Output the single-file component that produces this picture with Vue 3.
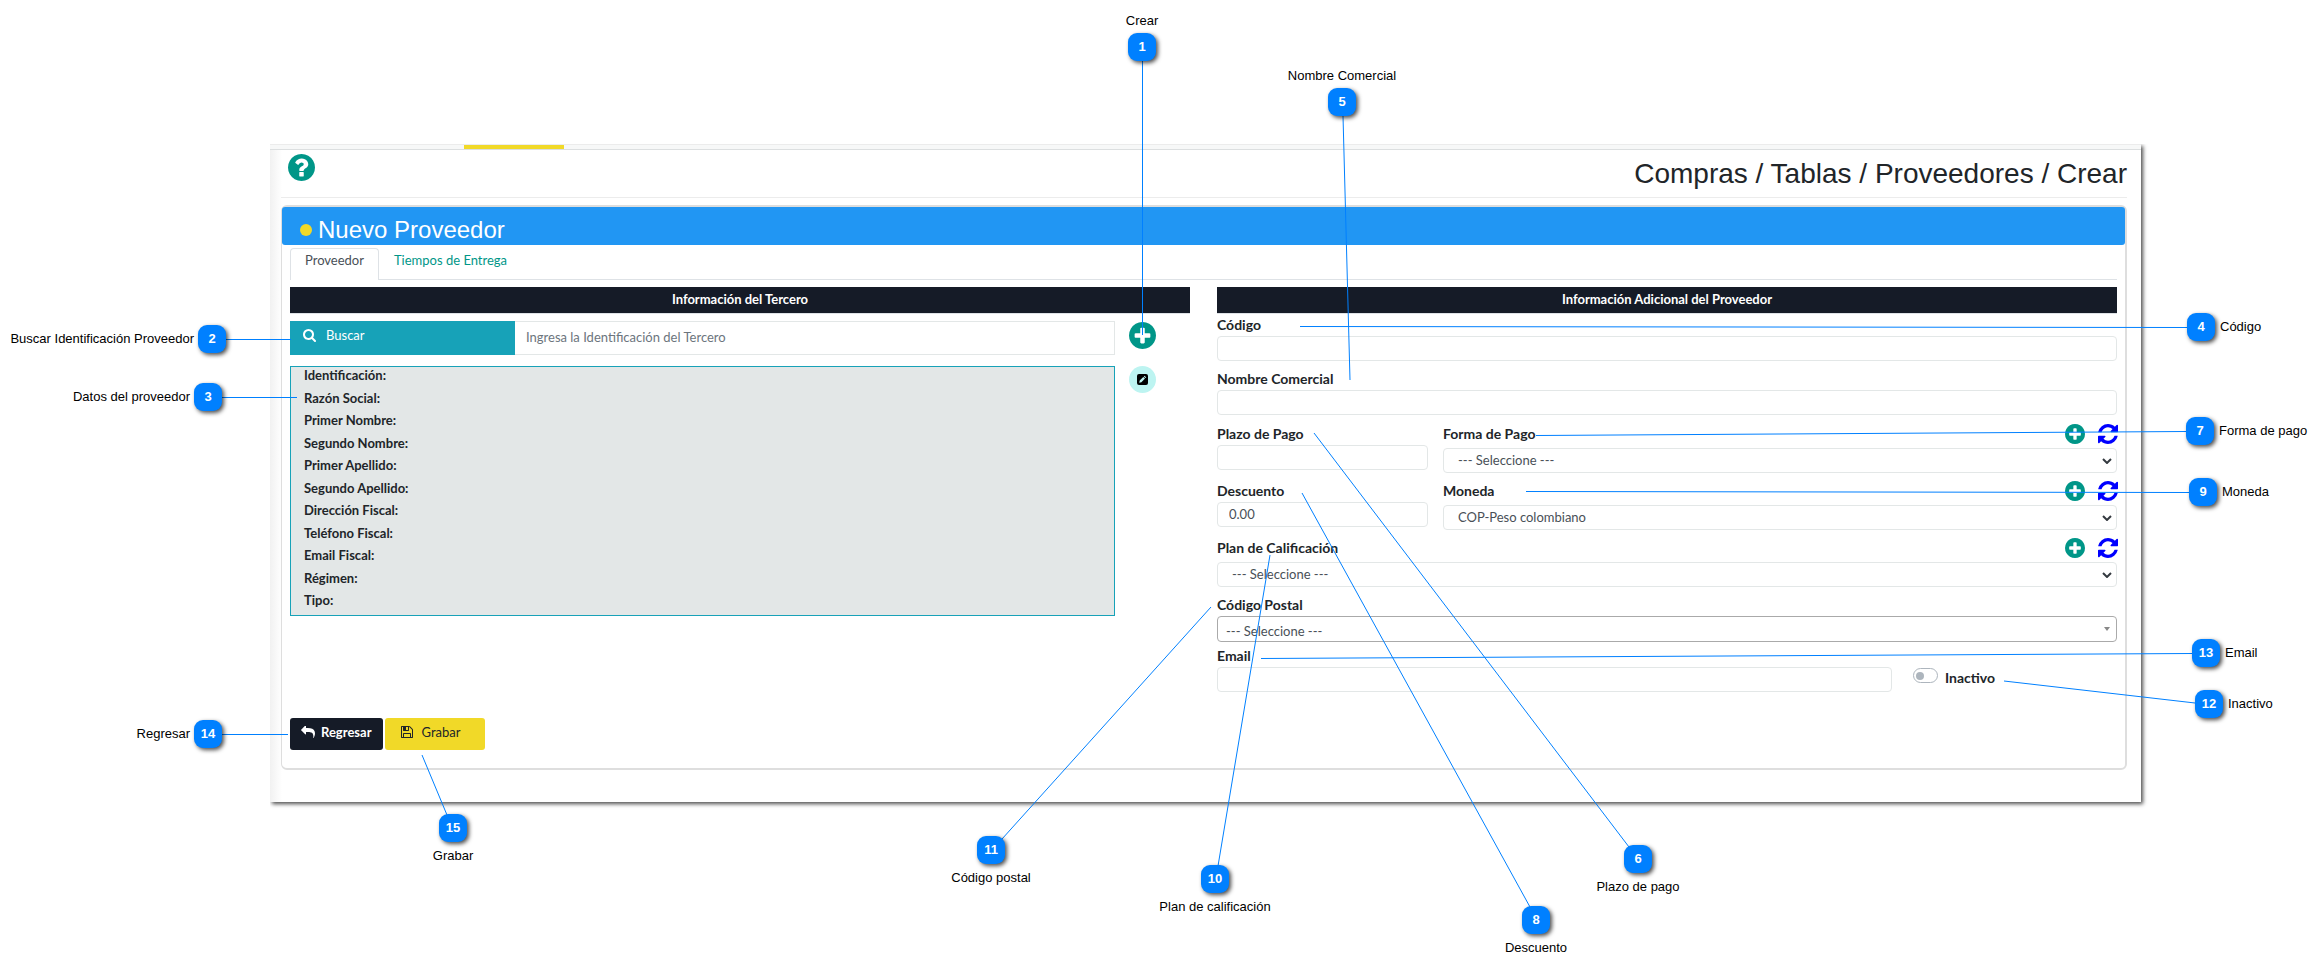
<script setup>
import { ref } from 'vue'

const CIRCLE =
  'M1664 896q0 209-103 385.5t-279.500 279.500-385.500 103-385.500-103-279.500-279.500-103-385.500 103-385.500 279.500-279.500 385.500-103 385.500 103 279.500 279.500 103 385.500z'
const helpPath =
  'M1024 1376v-192q0-14-9-23t-23-9h-192q-14 0-23 9t-9 23v192q0 14 9 23t23 9h192q14 0 23-9t9-23zM1280 704q0-88-55.500-163t-138.500-116-170-41q-243 0-371 213-15 24 8 42l132 100q7 6 19 6 16 0 25-12 53-68 86-92 34-24 86-24 48 0 85.500 26t37.500 59q0 38-20 61t-68 45q-63 28-115.500 86.500t-52.500 125.500v36q0 14 9 23t23 9h192q14 0 23-9t9-23q0-19 21.500-49.500t54.500-49.500q32-18 49-28.500t46-35 44.500-48 28-60.500 12.500-81z' +
  CIRCLE
const plusPath =
  'M1344 960v-128q0-26-19-45t-45-19h-256v-256q0-26-19-45t-45-19h-128q-26 0-45 19t-19 45v256h-256q-26 0-45 19t-19 45v128q0 26 19 45t45 19h256v256q0 26 19 45t45 19h128q26 0 45-19t19-45v-256h256q26 0 45-19t19-45z' +
  CIRCLE
const refreshPath =
  'M1639 1056q0 5-1 7-64 268-268 434.500t-478 166.500q-146 0-282.500-55t-243.500-157l-129 129q-19 19-45 19t-45-19-19-45v-448q0-26 19-45t45-19h448q26 0 45 19t19 45-19 45l-137 137q71 66 161 102t187 36q134 0 250-65t186-179q11-17 53-117 8-23 30-23h192q13 0 22.500 9.500t9.500 22.500zm25-800v448q0 26-19 45t-45 19h-448q-26 0-45-19t-19-45 19-45l138-138q-148-137-349-137-134 0-250 65t-186 179q-11 17-53 117-8 23-30 23h-199q-13 0-22.500-9.500t-9.500-22.500v-7q65-268 270-434.500t480-166.500q146 0 284 55.500t245 156.500l130-129q19-19 45-19t45 19 19 45z'
const searchPath =
  'M1216 832q0-185-131.500-316.500t-316.500-131.500-316.500 131.500-131.500 316.500 131.500 316.500 316.500 131.500 316.500-131.500 131.500-316.500zm512 832q0 52-38 90t-90 38q-54 0-90-38l-343-342q-179 124-399 124-143 0-273.500-55.500t-225-150-150-225-55.500-273.500 55.500-273.500 150-225 225-150 273.500-55.500 273.500 55.500 225 150 150 225 55.500 273.500q0 220-124 399l343 343q37 37 37 90z'
const replyPath =
  'M1792 1120q0 166-127 451-3 7-10.500 24t-13.500 30-13 22q-12 17-28 17-15 0-23.500-10t-8.500-25q0-9 2.500-26.500t2.500-23.500q5-68 5-123 0-101-17.500-181t-48.500-138.500-80-101-105.500-69.500-133-42.500-154-21.500-175.500-6h-224v256q0 26-19 45t-45 19-45-19l-512-512q-19-19-19-45t19-45l512-512q19-19 45-19t45 19 19 45v256h224q713 0 875 403 53 134 53 333z'
const savePath =
  'M512 1536h768v-384h-768v384zm896 0h128v-896q0-14-10-38.500t-20-34.500l-281-281q-10-10-34-20t-39-10v416q0 40-28 68t-68 28h-576q-40 0-68-28t-28-68v-416h-128v1280h128v-416q0-40 28-68t68-28h832q40 0 68 28t28 68v416zm-384-928v-320q0-13-9.500-22.500t-22.500-9.500h-192q-13 0-22.500 9.500t-9.500 22.500v320q0 13 9.500 22.500t22.500 9.500h192q13 0 22.500-9.500t9.500-22.500zm640 32v928q0 40-28 68t-68 28h-1344q-40 0-68-28t-28-68v-1344q0-40 28-68t68-28h928q40 0 88 20t76 48l280 280q28 28 48 76t20 88z'

const terceroFields = [
  'Identificación:', 'Razón Social:', 'Primer Nombre:', 'Segundo Nombre:',
  'Primer Apellido:', 'Segundo Apellido:', 'Dirección Fiscal:',
  'Teléfono Fiscal:', 'Email Fiscal:', 'Régimen:', 'Tipo:',
]

const busqueda = ref('')
const codigo = ref('')
const nombreComercial = ref('')
const plazo = ref('')
const descuento = ref('0.00')
const email = ref('')
const inactivo = ref(false)

// x, y: top left corner of the 28px badge; line: [x1, y1, x2, y2]
const callouts = [
  { n: 1, text: 'Crear', side: 'top', x: 1128, y: 33, line: [1142.5, 61, 1142.5, 335] },
  { n: 2, text: 'Buscar Identificación Proveedor', side: 'left', x: 198, y: 325, line: [226, 339.5, 291, 339.5] },
  { n: 3, text: 'Datos del proveedor', side: 'left', x: 194, y: 383, line: [222, 397.5, 297, 397.5] },
  { n: 4, text: 'Código', side: 'right', x: 2187, y: 313, line: [1300, 326.5, 2187, 327.5] },
  { n: 5, text: 'Nombre Comercial', side: 'top', x: 1328, y: 88, line: [1343, 116, 1350, 380] },
  { n: 6, text: 'Plazo de pago', side: 'bottom', x: 1624, y: 845, line: [1314, 433, 1629, 847] },
  { n: 7, text: 'Forma de pago', side: 'right', x: 2186, y: 417, line: [1536, 435.5, 2186, 431.5] },
  { n: 8, text: 'Descuento', side: 'bottom', x: 1522, y: 906, line: [1302, 493, 1530, 907] },
  { n: 9, text: 'Moneda', side: 'right', x: 2189, y: 478, line: [1526, 491.5, 2189, 492.5] },
  { n: 10, text: 'Plan de calificación', side: 'bottom', x: 1201, y: 865, line: [1270, 555, 1218, 866] },
  { n: 11, text: 'Código postal', side: 'bottom', x: 977, y: 836, line: [1211, 607, 1002, 839] },
  { n: 12, text: 'Inactivo', side: 'right', x: 2195, y: 690, line: [2004, 681, 2195, 703] },
  { n: 13, text: 'Email', side: 'right', x: 2192, y: 639, line: [1261, 658.5, 2192, 653.5] },
  { n: 14, text: 'Regresar', side: 'left', x: 194, y: 720, line: [222, 734.5, 288, 734.5] },
  { n: 15, text: 'Grabar', side: 'bottom', x: 439, y: 814, line: [422, 755, 447, 815] },
]
</script>

<template>
  <div class="stage">
    <main class="window">
      <div class="strip"><span class="strip-mark"></span></div>
      <div class="body">
        <header class="page-head">
          <button type="button" class="icon-btn help" aria-label="Ayuda">
            <svg viewBox="128 128 1536 1536"><path :d="helpPath" fill-rule="evenodd" /></svg>
          </button>
          <h1>Compras / Tablas / Proveedores / Crear</h1>
        </header>

        <section class="card">
          <h2 class="card-head"><span class="dot"></span>Nuevo Proveedor</h2>
          <nav class="tabs">
            <a href="#proveedor" class="tab active">Proveedor</a>
            <a href="#tiempos" class="tab">Tiempos de Entrega</a>
          </nav>

          <form class="columns" @submit.prevent>
            <div class="col">
              <h3>Información del Tercero</h3>
              <div class="lookup">
                <div class="search">
                  <button type="button" class="buscar">
                    <svg viewBox="64 128 1664 1664"><path :d="searchPath" fill-rule="evenodd" /></svg>
                    Buscar
                  </button>
                  <input v-model="busqueda" type="text" placeholder="Ingresa la Identificación del Tercero" aria-label="Identificación del Tercero" />
                </div>
                <button type="button" class="icon-btn add" aria-label="Crear">
                  <svg viewBox="128 128 1536 1536"><path :d="plusPath" fill-rule="evenodd" /></svg>
                </button>
                <ul class="tercero">
                  <li v-for="f in terceroFields" :key="f">{{ f }}</li>
                </ul>
                <button type="button" class="icon-btn edit" aria-label="Editar">
                  <svg viewBox="0 0 11 11">
                    <rect width="11" height="11" rx="2" fill="#000" />
                    <path d="M2.200 8.800l.5-2.200 3.600-3.700 1.700 1.700-3.600 3.700zM6.800 2.400l.8-.7 1.700 1.700-.8.7z" fill="#bdf4f1" />
                  </svg>
                </button>
              </div>
            </div>

            <div class="col">
              <h3>Información Adicional del Proveedor</h3>
              <div class="fields">
                <div class="field">
                  <label for="codigo">Código</label>
                  <input id="codigo" v-model="codigo" type="text" />
                </div>
                <div class="field">
                  <label for="nombre">Nombre Comercial</label>
                  <input id="nombre" v-model="nombreComercial" type="text" />
                </div>
                <div class="pair first">
                  <div class="field">
                    <label for="plazo">Plazo de Pago</label>
                    <input id="plazo" v-model="plazo" type="text" />
                  </div>
                  <div class="field tools">
                    <div class="label-row">
                      <label for="forma">Forma de Pago</label>
                      <button type="button" class="icon-btn small" aria-label="Agregar forma de pago">
                        <svg viewBox="128 128 1536 1536"><path :d="plusPath" fill-rule="evenodd" /></svg>
                      </button>
                      <button type="button" class="icon-btn small refresh" aria-label="Actualizar formas de pago">
                        <svg viewBox="128 128 1536 1536"><path :d="refreshPath" /></svg>
                      </button>
                    </div>
                    <div class="select">
                      <select id="forma"><option>--- Seleccione ---</option></select>
                      <svg class="chevron" viewBox="0 0 10 6"><path d="M1 1l4 4 4-4" /></svg>
                    </div>
                  </div>
                </div>
                <div class="pair">
                  <div class="field">
                    <label for="descuento">Descuento</label>
                    <input id="descuento" v-model="descuento" type="text" />
                  </div>
                  <div class="field tools">
                    <div class="label-row">
                      <label for="moneda">Moneda</label>
                      <button type="button" class="icon-btn small" aria-label="Agregar moneda">
                        <svg viewBox="128 128 1536 1536"><path :d="plusPath" fill-rule="evenodd" /></svg>
                      </button>
                      <button type="button" class="icon-btn small refresh" aria-label="Actualizar monedas">
                        <svg viewBox="128 128 1536 1536"><path :d="refreshPath" /></svg>
                      </button>
                    </div>
                    <div class="select">
                      <select id="moneda"><option>COP-Peso colombiano</option></select>
                      <svg class="chevron" viewBox="0 0 10 6"><path d="M1 1l4 4 4-4" /></svg>
                    </div>
                  </div>
                </div>
                <div class="field tools">
                  <div class="label-row">
                    <label for="plan">Plan de Calificación</label>
                    <button type="button" class="icon-btn small" aria-label="Agregar plan">
                      <svg viewBox="128 128 1536 1536"><path :d="plusPath" fill-rule="evenodd" /></svg>
                    </button>
                    <button type="button" class="icon-btn small refresh" aria-label="Actualizar planes">
                      <svg viewBox="128 128 1536 1536"><path :d="refreshPath" /></svg>
                    </button>
                  </div>
                  <div class="select">
                    <select id="plan"><option>--- Seleccione ---</option></select>
                    <svg class="chevron" viewBox="0 0 10 6"><path d="M1 1l4 4 4-4" /></svg>
                  </div>
                </div>
                <div class="field">
                  <label for="postal">Código Postal</label>
                  <div class="select postal">
                    <select id="postal"><option>--- Seleccione ---</option></select>
                    <svg class="caret" viewBox="0 0 6 4"><path d="M0 0h6l-3 4z" /></svg>
                  </div>
                </div>
                <div class="last">
                  <div class="field">
                    <label for="email">Email</label>
                    <input id="email" v-model="email" type="text" />
                  </div>
                  <div class="switch">
                    <input id="inactivo" v-model="inactivo" type="checkbox" />
                    <label for="inactivo">Inactivo</label>
                  </div>
                </div>
              </div>
            </div>
          </form>

          <footer class="actions">
            <button type="button" class="btn back">
              <svg viewBox="0 128 1792 1536"><path :d="replyPath" /></svg>
              Regresar
            </button>
            <button type="submit" class="btn save">
              <svg viewBox="128 128 1536 1536"><path :d="savePath" fill-rule="evenodd" /></svg>
              Grabar
            </button>
          </footer>
        </section>
      </div>
    </main>

    <svg class="lines">
      <line v-for="c in callouts" :key="c.n" :x1="c.line[0]" :y1="c.line[1]" :x2="c.line[2]" :y2="c.line[3]" />
    </svg>
    <div v-for="c in callouts" :key="c.n" class="callout" :class="c.side" :style="{ left: c.x + 'px', top: c.y + 'px' }">
      <span class="badge">{{ c.n }}</span>
      <span class="caption">{{ c.text }}</span>
    </div>
  </div>
</template>

<style>
body {
  margin: 0;
  background: #fff;
}
</style>

<style scoped>
.stage {
  position: relative;
  box-sizing: border-box;
  padding: 144px 181px 168px 270px;
  overflow: hidden;
  font-family: Lato, "Liberation Sans", sans-serif;
  font-size: 13px;
  color: #212529;
}
.stage *,
.stage *::before {
  box-sizing: border-box;
}
button,
input,
select {
  margin: 0;
  font: inherit;
  color: inherit;
}
button {
  padding: 0;
  border: 0;
  background: none;
  cursor: pointer;
}
svg {
  display: block;
  fill: currentColor;
}
h1,
h2,
h3 {
  margin: 0;
}

.window {
  background: linear-gradient(to right, #f1f1f1, #fff 12px);
  box-shadow: 2px 2px 4px rgba(0, 0, 0, 0.7);
  clip-path: inset(0 -12px -12px 0);
}
.strip {
  height: 6px;
  padding-left: 194px;
  background: #f7f8f8;
  border-top: 1px solid #ececec;
  border-bottom: 1px solid #dcdfe0;
}
.strip-mark {
  display: block;
  width: 100px;
  height: 4px;
  background: #f1d928;
}
.body {
  padding: 0 14px 32px 11px;
}
.page-head {
  display: flex;
  align-items: flex-start;
  justify-content: space-between;
  height: 48px;
  padding: 4px 0 0 7px;
  border-bottom: 1px solid #ececec;
}
.page-head h1 {
  font: 400 28px/40px "Liberation Sans", Arial, sans-serif;
}
.icon-btn {
  width: 27px;
  height: 27px;
  color: #009688;
}
.icon-btn svg {
  width: 100%;
  height: 100%;
}

.card {
  margin-top: 7px;
  border: 2px solid #dedede;
  border-left-width: 1px;
  border-radius: 6px;
  background: #fff;
}
.card-head {
  display: flex;
  align-items: center;
  gap: 6px;
  height: 38px;
  padding: 8px 18px 0;
  border-radius: 3px;
  background: #2196f3;
  color: #fff;
  font: 400 24px/30px "Liberation Sans", Arial, sans-serif;
}
.dot {
  width: 12px;
  height: 12px;
  border-radius: 50%;
  background: #f1d928;
}
.tabs {
  display: flex;
  margin: 3px 8px 0;
  border-bottom: 1px solid #dee2e6;
}
.tab {
  height: 32px;
  padding: 0 14px;
  margin-bottom: -1px;
  border: 1px solid transparent;
  border-bottom: 0;
  border-radius: 4px 4px 0 0;
  color: #009688;
  line-height: 22px;
  text-decoration: none;
}
.tab.active {
  border-color: #dee2e6;
  background: #fff;
  color: #495057;
}

.columns {
  display: grid;
  grid-template-columns: 1fr 1fr;
  gap: 27px;
  padding: 7px 8px 0;
}
.col h3 {
  height: 27px;
  border-bottom: 1px solid #dee2e6;
  background: #151b27;
  color: #fff;
  font-size: 13px;
  font-weight: 700;
  line-height: 25px;
  text-align: center;
}
.lookup {
  display: grid;
  grid-template-columns: 1fr 61px;
  gap: 11px 14px;
  padding-top: 7px;
}
.search {
  display: flex;
}
.buscar {
  display: flex;
  align-items: center;
  gap: 10px;
  flex: 0 0 225px;
  height: 34px;
  padding: 0 0 6px 13px;
  background: #17a2b8;
  color: #fff;
}
.buscar svg {
  width: 13px;
  height: 13px;
}
.search input {
  flex: 1;
  min-width: 0;
  height: 34px;
  padding: 0 11px 2px;
  border: 1px solid #e3e7e7;
  border-left: 0;
}
.search input::placeholder {
  color: #6c757d;
}
.add {
  margin-top: 1px;
}
.edit {
  display: grid;
  place-items: center;
  border-radius: 50%;
  background: #bdf4f1;
}
.edit svg {
  width: 11px;
  height: 11px;
}
.tercero {
  display: flex;
  flex-direction: column;
  justify-content: space-between;
  min-height: 250px;
  margin: 0;
  padding: 0 13px 7px;
  border: 1px solid #17a2b8;
  background: #e3e7e7;
  list-style: none;
  font-weight: 700;
  line-height: 16px;
}

.fields {
  display: flex;
  flex-direction: column;
  gap: 8px;
  padding-top: 1px;
}
.field {
  display: flex;
  flex-direction: column;
  gap: 1px;
}
.field.tools {
  gap: 0;
}
.field label,
.switch label {
  font-size: 14px;
  font-weight: 700;
  line-height: 20px;
}
.label-row {
  display: flex;
  height: 24px;
}
.label-row label {
  flex: 1;
}
.small {
  width: 20px;
  height: 20px;
}
.refresh {
  margin: 0 -1px 0 13px;
  color: #00f;
}
.field input,
.select select {
  width: 100%;
  height: 25px;
  padding: 0 11px 2px;
  border: 1px solid #e3e7e7;
  border-radius: 4px;
  background: #fff;
  color: #495057;
}
.pair {
  display: grid;
  grid-template-columns: 211fr 674fr;
  align-items: start;
  gap: 15px;
}
.pair.first {
  padding-top: 1px;
}
.select {
  display: grid;
  align-items: center;
}
.select > * {
  grid-area: 1 / 1;
}
.select select {
  padding-left: 14px;
  appearance: none;
}
.select svg {
  justify-self: end;
  pointer-events: none;
}
.chevron {
  width: 10px;
  height: 6px;
  margin-right: 5px;
  fill: none;
  stroke: #343a40;
  stroke-width: 2;
}
.select.postal select {
  height: 26px;
  padding: 4px 8px 0;
  border-color: #aaa;
}
.caret {
  width: 6px;
  height: 4px;
  margin-right: 7px;
  fill: #888;
}
.last {
  display: grid;
  grid-template-columns: 675fr 204fr;
  gap: 21px;
  margin-top: -4px;
}
.switch {
  display: flex;
  align-items: flex-start;
  gap: 7px;
  padding-top: 22px;
}
.switch input {
  display: flex;
  align-items: center;
  width: 25px;
  height: 15px;
  padding-left: 2px;
  border: 1px solid #adb5bd;
  border-radius: 8px;
  background: #fff;
  appearance: none;
}
.switch input::before {
  content: "";
  width: 8px;
  height: 8px;
  border-radius: 50%;
  background: #adb5bd;
}
.switch input:checked {
  justify-content: flex-end;
  padding: 0 2px;
}

.actions {
  display: flex;
  gap: 2px;
  padding: 26px 8px 18px;
}
.btn {
  display: flex;
  align-items: center;
  height: 32px;
  padding-bottom: 5px;
  border-radius: 3px;
}
.back {
  gap: 6px;
  padding-left: 11px;
  padding-right: 11px;
  background: #151b27;
  color: #fff;
  font-weight: 700;
}
.back svg {
  width: 14px;
  height: 12px;
}
.save {
  gap: 9px;
  padding-left: 16px;
  padding-right: 25px;
  background: #f1d928;
}
.save svg {
  width: 12px;
  height: 12px;
}

.lines {
  position: absolute;
  inset: 0;
  width: 100%;
  height: 100%;
  stroke: #0080ff;
  stroke-width: 1;
  pointer-events: none;
}
.callout {
  position: absolute;
  display: flex;
  align-items: center;
  justify-content: center;
  width: 28px;
  height: 28px;
  color: #000;
  font-family: "Liberation Sans", Arial, sans-serif;
  font-size: 13px;
  line-height: 18px;
}
.badge {
  width: 28px;
  height: 28px;
  border-radius: 9px;
  background: #0080ff;
  box-shadow: 2px 2px 4px rgba(0, 0, 0, 0.7);
  color: #fff;
  font-weight: 700;
  line-height: 28px;
  text-align: center;
}
.caption {
  position: absolute;
  white-space: nowrap;
}
.top .caption {
  bottom: 31px;
}
.bottom .caption {
  top: 33px;
}
.left .caption {
  right: 32px;
}
.right .caption {
  left: 33px;
}
</style>
